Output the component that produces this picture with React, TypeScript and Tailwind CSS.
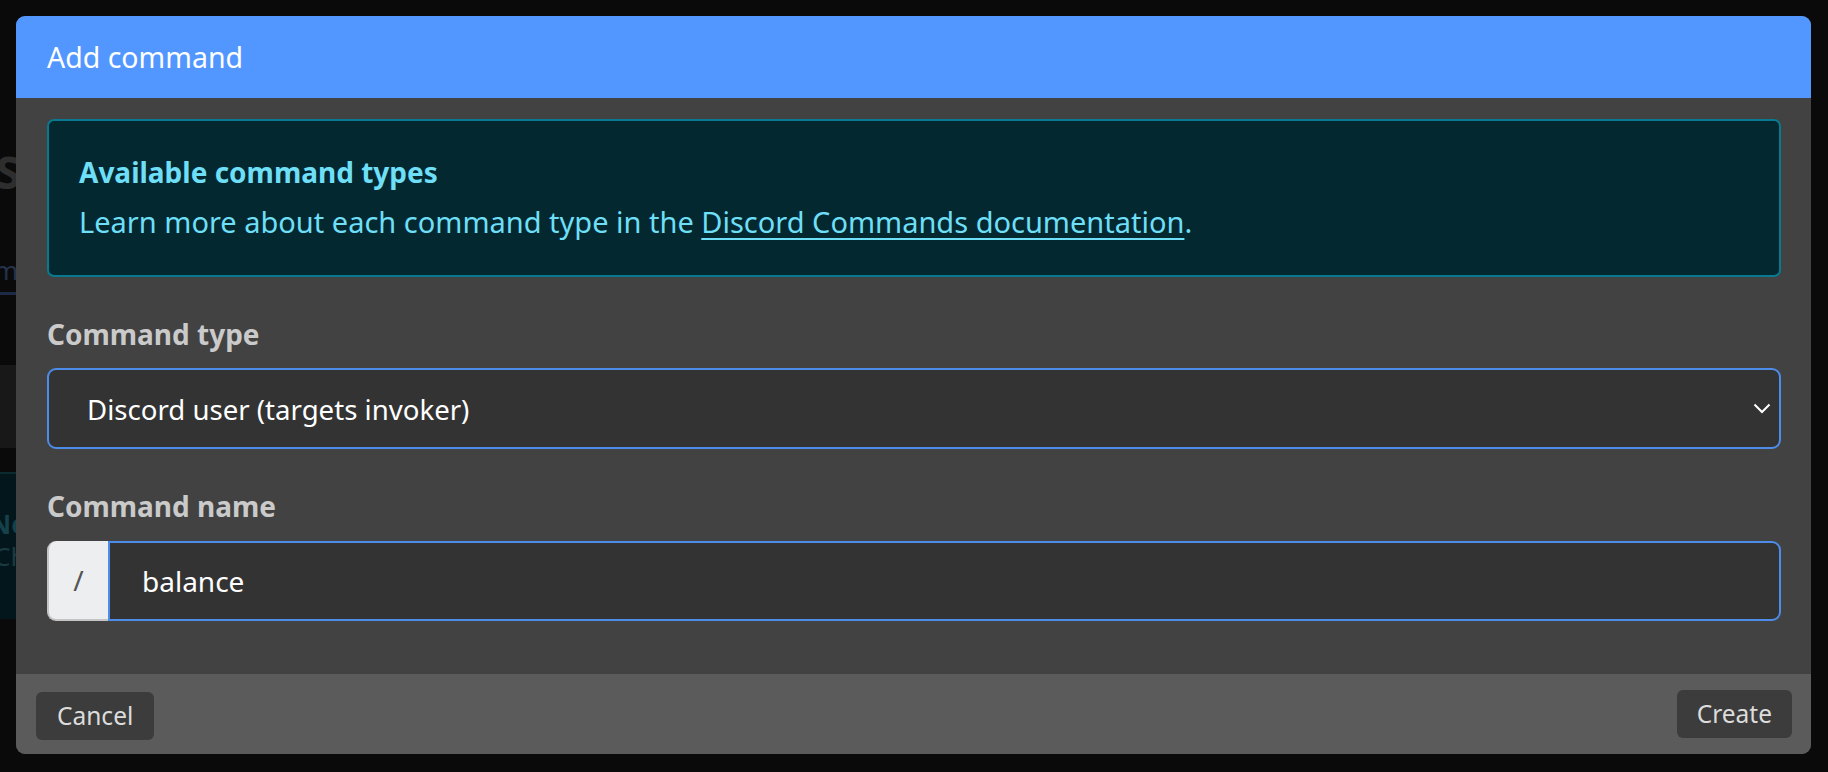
import React from 'react'

function Backdrop() {
  return (
    <div className="flex flex-col w-[16px] h-[772px] overflow-hidden">
      <div className="h-[150px]" />
      <div className="text-[44px] leading-[44px] font-bold text-[#2e2e2e] whitespace-nowrap ml-[-4px]">Sc</div>
      <div className="mt-[62px] text-[26px] leading-[28px] text-[#24324a] whitespace-nowrap ml-[-6px]">m</div>
      <div className="mt-[8px] h-[3px] w-full bg-[#1c2a45]" />
      <div className="mt-[70px] h-[83px] w-full bg-[#181818]" />
      <div className="mt-[24px] h-[147px] w-full bg-[#03161b] border-t-2 border-[#0a2a30] pt-[34px]">
        <div className="text-[26px] leading-[32px] font-bold text-[#15414b] whitespace-nowrap ml-[-10px]">Ne</div>
        <div className="text-[26px] leading-[32px] text-[#1b3a42] whitespace-nowrap ml-[-6px]">Ch</div>
      </div>
    </div>
  )
}

function Modal() {
  return (
    <div className="flex flex-col w-[1795px] h-[738px] rounded-[9px] overflow-hidden bg-[#424242]">
      <div className="flex items-center h-[82px] bg-[#5296ff] pl-[31px]">
        <span className="text-[28.5px] leading-[42px] text-white">Add command</span>
      </div>

      <div className="flex flex-col pt-[21px] pl-[31px] pr-[30px] pb-[53px]">
        <div className="flex flex-col rounded-[7px] border-2 border-[#087990] bg-[#032830] pt-[30px] pb-[32px] px-[30px] text-[#6edff6]">
          <div className="text-[28px] leading-[42px] font-bold mb-[8px]">Available command types</div>
          <div className="text-[29px] leading-[42px]">
            Learn more about each command type in the{' '}
            <a href="#" className="underline underline-offset-[5px] decoration-2">Discord Commands documentation</a>.
          </div>
        </div>

        <label className="mt-[36px] text-[28px] leading-[42px] font-bold text-[#cacaca]">Command type</label>
        <div className="mt-[13px] flex items-center justify-between h-[81px] rounded-[9px] border-2 border-[#4d8ce8] bg-[#333333] pl-[38px] pr-[7px]">
          <span className="text-[27.6px] leading-[42px] text-white">Discord user (targets invoker)</span>
          <svg width="18" height="11" viewBox="0 0 18 11" className="mr-[1px]">
            <polyline points="1.5,1.5 9,9 16.5,1.5" fill="none" stroke="#ffffff" strokeWidth="2" />
          </svg>
        </div>

        <label className="mt-[36px] text-[28px] leading-[42px] font-bold text-[#cacaca]">Command name</label>
        <div className="mt-[14px] flex h-[80px]">
          <div className="flex items-center justify-center w-[61px] rounded-l-[9px] bg-[#eceef0] border-l-2 border-b-2 border-[#c4c4c4] text-[28px] text-[#555555]">/</div>
          <div className="flex flex-1 items-center rounded-r-[9px] border-2 border-[#4d8ce8] bg-[#333333] pl-[32px]">
            <span className="text-[28px] leading-[42px] text-white">balance</span>
          </div>
        </div>
      </div>

      <div className="flex items-center justify-between h-[80px] bg-[#5b5b5b] pl-[20px] pr-[19px] mt-auto">
        <button className="h-[48px] px-[21px] rounded-[6px] bg-[#3c3c3c] text-[24.5px] leading-[36px] text-[#dcdcdc] mt-[4px]">Cancel</button>
        <button className="h-[48px] px-[20px] rounded-[6px] bg-[#3c3c3c] text-[24.5px] leading-[36px] text-[#dcdcdc]">Create</button>
      </div>
    </div>
  )
}

export default function App() {
  return (
    <div className="relative w-full h-[772px] bg-[#0a0a0a] font-['Noto_Sans',sans-serif]">
      <Backdrop />
      <div className="absolute inset-0 pl-[16px] pt-[16px]">
        <Modal />
      </div>
    </div>
  )
}
